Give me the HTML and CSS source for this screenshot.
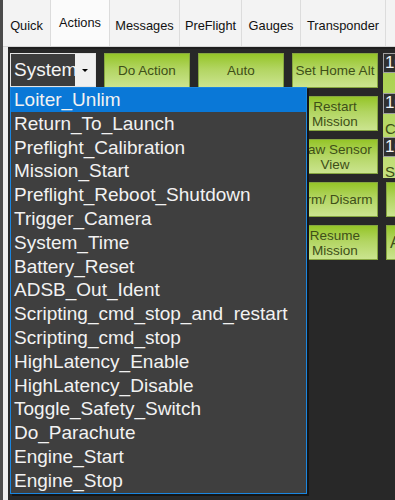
FILE: index.html
```html
<!DOCTYPE html>
<html lang="en">
<head>
  <meta charset="UTF-8" />
  <title>Actions</title>
  <link rel="stylesheet" href="styles.css">
</head>
<body>
  <div class="janela">
    <div class="abas">
      <div class="aba">Quick</div>
      <div class="aba ativa">Actions</div>
      <div class="aba">Messages</div>
      <div class="aba">PreFlight</div>
      <div class="aba">Gauges</div>
      <div class="aba">Transponder</div>
      <div class="aba"></div>
    </div>

    <div class="pagina">
      <div class="painel">
        <div class="grade">
          <div class="combo">
            <div class="combo-texto">System_Time</div>
            <div class="combo-seta"><span class="triangulo"></span></div>

            <ul class="lista">
              <li class="selecionado">Loiter_Unlim</li>
              <li>Return_To_Launch</li>
              <li>Preflight_Calibration</li>
              <li>Mission_Start</li>
              <li>Preflight_Reboot_Shutdown</li>
              <li>Trigger_Camera</li>
              <li>System_Time</li>
              <li>Battery_Reset</li>
              <li>ADSB_Out_Ident</li>
              <li>Scripting_cmd_stop_and_restart</li>
              <li>Scripting_cmd_stop</li>
              <li>HighLatency_Enable</li>
              <li>HighLatency_Disable</li>
              <li>Toggle_Safety_Switch</li>
              <li>Do_Parachute</li>
              <li>Engine_Start</li>
              <li>Engine_Stop</li>
            </ul>
          </div>
          <button class="botao">Do Action</button>
          <button class="botao">Auto</button>
          <button class="botao">Set Home Alt</button>

          <div class="grupo">
            <div class="numero">10</div>
            <div class="rotulo"></div>
            <div class="numero">10</div>
            <div class="rotulo">Change Alt</div>
            <div class="numero">10</div>
            <div class="rotulo">Speed</div>
          </div>

          <button class="botao escondido">WP</button>
          <button class="botao escondido">Set WP</button>
          <button class="botao escondido">Loiter</button>
          <button class="botao">Restart Mission</button>

          <button class="botao escondido">Mode</button>
          <button class="botao escondido">Set Mode</button>
          <button class="botao escondido">RTL</button>
          <button class="botao">Raw Sensor View</button>

          <button class="botao escondido">Mount</button>
          <button class="botao escondido">Set Mount</button>
          <button class="botao escondido">Manual</button>
          <button class="botao">Arm/ Disarm</button>
          <button class="botao"></button>

          <button class="botao escondido">Joystick</button>
          <button class="botao escondido">Clear Track</button>
          <button class="botao escondido">Gimbal</button>
          <button class="botao">Resume Mission</button>
          <button class="botao esquerda">Abort Land</button>
        </div>
      </div>
    </div>
  </div>
</body>
</html>
```

FILE: styles.css
```css
* {
  box-sizing: border-box;
  margin: 0;
  padding: 0;
  font-family: "Liberation Sans", Arial, sans-serif;
}

html, body {
  width: 395px;
  height: 500px;
  overflow: hidden;
  background: #282828;
}

.janela {
  height: 100%;
  display: flex;
  flex-direction: column;
  border-left: 3px solid #4b4b4b;
}

/* barra de abas */
.abas {
  height: 47px;
  display: flex;
  background: #f0f0f0;
  border-bottom: 1px solid #d6d6d6;
}

.aba {
  display: flex;
  align-items: center;
  justify-content: center;
  padding-top: 4px;
  font-size: 12.8px;
  color: #111;
  background: #f3f3f3;
  border-right: 1px solid #dcdcdc;
  flex-shrink: 0;
}

.aba:nth-child(1) { width: 48px; }
.aba:nth-child(2) { width: 59px; }
.aba:nth-child(3) { width: 70px; }
.aba:nth-child(4) { width: 62px; }
.aba:nth-child(5) { width: 59px; }
.aba:nth-child(6) { width: 85px; }
.aba:nth-child(7) { width: 30px; }

.aba.ativa {
  background: #fbfbfb;
  padding-top: 0;
  padding-bottom: 2px;
}

.pagina {
  flex: 1;
  display: flex;
  padding-left: 5px;
  background: #ededed;
}

.painel {
  flex: 1;
  background: #282828;
  border-top: 2px solid #1e1e1e;
  padding: 4px 0 0 2px;
  overflow: hidden;
  position: relative;
}

.grade {
  display: grid;
  grid-template-columns: 86px 86px 86px 86px 86px;
  grid-auto-rows: 35px;
  column-gap: 8px;
  row-gap: 8px;
  width: 520px;
}

/* combobox */
.combo {
  position: relative;
  display: flex;
  height: 34px;
  border: 1px solid #e4e4e4;
  background: #f0f0f0;
}

.combo-texto {
  width: 64px;
  background: #3c3c3c;
  color: #f4f4f4;
  font-size: 19px;
  line-height: 32px;
  padding-left: 3px;
  overflow: hidden;
  white-space: nowrap;
}

.combo-seta {
  flex: 1;
  display: flex;
  align-items: center;
  justify-content: center;
}

.triangulo {
  width: 0;
  height: 0;
  border-left: 3px solid transparent;
  border-right: 3px solid transparent;
  border-top: 3px solid #000;
}

.lista {
  position: absolute;
  top: 33px;
  left: -1px;
  width: 297px;
  list-style: none;
  background: #3f3f3f;
  border: 1px solid #1a86e0;
  box-shadow: 2px 2px 0 #151515;
  z-index: 10;
}

.lista li {
  height: 23.8px;
  line-height: 23.8px;
  font-size: 19px;
  color: #f2f2f2;
  padding-left: 3px;
  white-space: nowrap;
}

.lista li.selecionado {
  background: #0a78d7;
}

/* botoes verdes */
.botao {
  display: flex;
  align-items: center;
  justify-content: center;
  text-align: center;
  font-size: 13.5px;
  line-height: 15px;
  color: #3e4f18;
  border: 1px solid #86a640;
  background: linear-gradient(to bottom, #95c528 0%, #b2d561 45%, #cbe48f 100%);
  padding: 0 1px;
}

/* ficam por baixo da lista aberta */
.botao.escondido {
  visibility: hidden;
}

.botao.esquerda {
  justify-content: flex-start;
  padding-left: 3px;
  font-size: 16px;
}

/* grupo com campos numericos */
.grupo {
  grid-row: span 3;
  height: 125px;
  margin-left: -3px;
  background: linear-gradient(to bottom, #a6cf48, #c4e07e);
  display: flex;
  flex-direction: column;
}

.numero {
  height: 20px;
  background: #303030;
  border: 1px solid #a0a0a0;
  color: #f2f2f2;
  font-size: 17px;
  line-height: 18px;
  padding-left: 1px;
}

.numero:nth-child(3) { height: 21px; }
.numero:nth-child(5) { height: 21px; }

.rotulo {
  height: 21px;
  font-size: 15px;
  color: #3e4f18;
  padding: 6px 0 0 2px;
  white-space: nowrap;
}

.rotulo:nth-child(4) { height: 23px; }
```
